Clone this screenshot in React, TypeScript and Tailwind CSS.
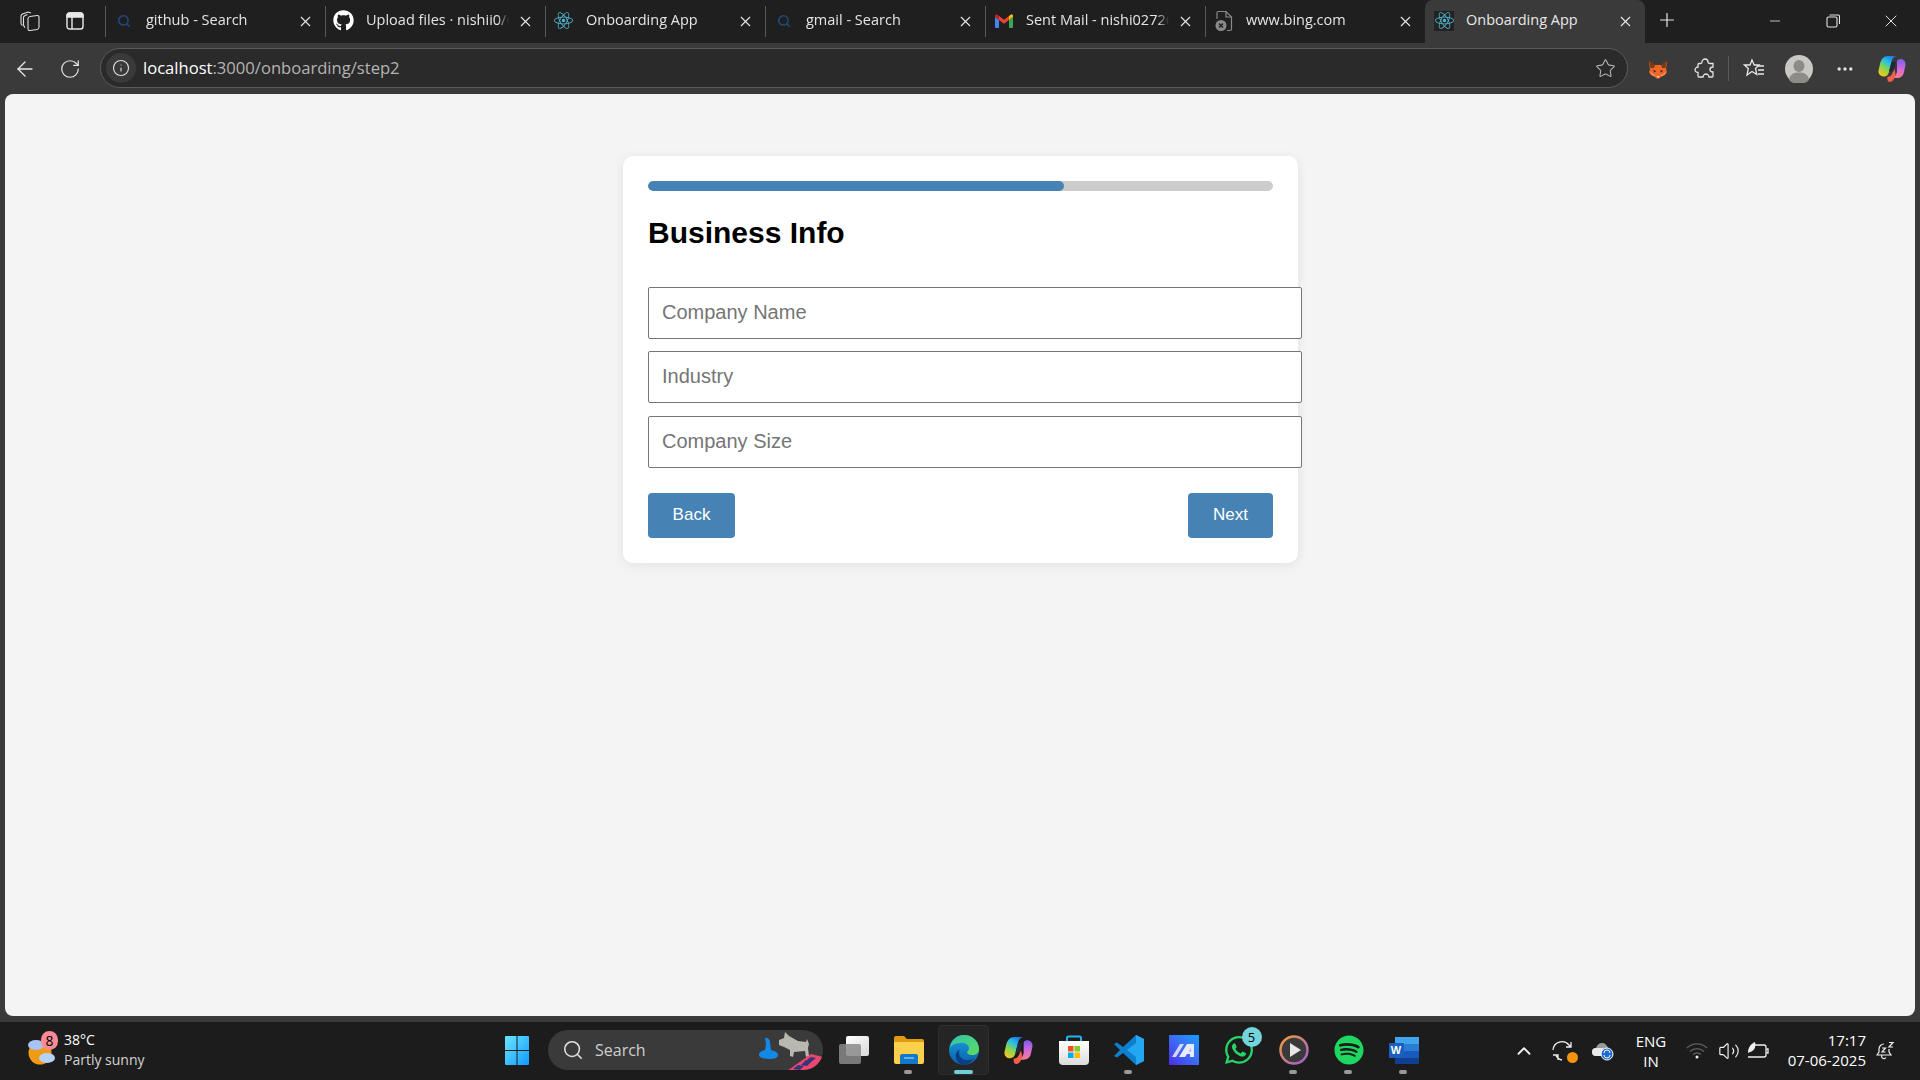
import React from 'react';
import { FaGithub, FaReact, FaSpotify, FaWhatsapp } from 'react-icons/fa';
import { ArrowLeft, ChevronUp, Info, Minus, MoreHorizontal, Plus, RotateCw, Search, Star, Volume2, X } from 'lucide-react';

const ui = "font-['Open_Sans',sans-serif]";

function GmailIcon() {
  return (
    <svg width="18" height="16" viewBox="0 0 18 14">
      <path d="M0 3v10a1 1 0 0 0 1 1h3V6z" fill="#4285f4" />
      <path d="M14 6v8h3a1 1 0 0 0 1-1V3z" fill="#34a853" />
      <path d="M0 3l4 3V2L2 .5C1 0 0 1 0 2z" fill="#c5221f" />
      <path d="M4 2v4l5 3.8L14 6V2L9 5.800z" fill="#ea4335" />
      <path d="M14 2v4l4-3V2c0-1-1-2-2-1.500z" fill="#fbbc04" />
    </svg>
  );
}

function BrokenPageIcon() {
  return (
    <svg width="18" height="22" viewBox="0 0 18 22" fill="none">
      <path d="M2 9V3a1.500 1.500 0 0 1 1.500-1.500H11L16.500 7v12a1.500 1.500 0 0 1-1.500 1.500h-3" stroke="#8a8a8a" strokeWidth="1.200" />
      <path d="M11 1.500V7h5.500" stroke="#8a8a8a" strokeWidth="1.200" />
      <circle cx="6" cy="15.500" r="5.500" fill="#8a8a8a" />
      <path d="M4 13.500l4 4M8 13.500l-4 4" stroke="#222" strokeWidth="1.500" />
    </svg>
  );
}

const tabs = [
  { title: 'github - Search', icon: <Search size={14} color="#1c4e80" strokeWidth={2.500} /> },
  { title: 'Upload files · nishii0/Onboarding', icon: <FaGithub size={21} color="#fff" /> },
  { title: 'Onboarding App', icon: <FaReact size={19} color="#4fb3cf" /> },
  { title: 'gmail - Search', icon: <Search size={14} color="#1c4e80" strokeWidth={2.500} /> },
  { title: 'Sent Mail - nishi02726@gmail.com', icon: <GmailIcon /> },
  { title: 'www.bing.com', icon: <BrokenPageIcon /> },
];

function Tab({ title, icon }: { title: string; icon: React.ReactNode }) {
  return (
    <div className="relative w-[220px] h-full flex items-center pl-[6px]">
      <div className="w-px h-[31px] bg-[#5a5a5a] shrink-0" />
      <div className="w-[33px] flex justify-center shrink-0 ml-[1px] -mt-[2px]">{icon}</div>
      <div className="ml-[6px] w-[143px] -mt-[3px] text-[14.500px] text-[#e4e4e4] whitespace-nowrap overflow-hidden [mask-image:linear-gradient(to_right,black_92%,transparent)]">{title}</div>
      <X size={17} color="#e8e8e8" strokeWidth={1.500} className="absolute left-[198px] -mt-[1px]" />
    </div>
  );
}

function FoxIcon() {
  return (
    <svg width="20" height="20" viewBox="0 0 20 20">
      <path d="M1 3l6 3h6l6-3-1 7 1 3-2 3-4 2-1.500 1.500h-3L7 18l-4-2-2-3 1-3z" fill="#f0672b" />
      <path d="M1 1l6 5-1 3H2.500zM19 1l-6 5 1 3h3.500z" fill="#7a3a14" />
      <path d="M8.500 17h3l-1.500 2z" fill="#e8e8e8" />
      <path d="M5 11l3 1-1.500 1.500zM15 11l-3 1 1.500 1.500z" fill="#2a2018" />
      <path d="M2 13l4 3 2 1H6l-3-2z" fill="#f6a26a" />
      <path d="M18 13l-4 3-2 1h2l3-2z" fill="#f6a26a" />
    </svg>
  );
}

function PuzzleIcon() {
  return (
    <svg width="22" height="24" viewBox="0 0 22 24" fill="none" stroke="#e4e4e4" strokeWidth="1.300">
      <path d="M8 5a3 3 0 0 1 3-3 3 3 0 0 1 3 3c0 1 1 1.500 2 1.500h3v3.500c-1.500 0-3 1-3 2.500s1.500 2.500 3 2.500v4a1 1 0 0 1-1 1h-3c0-1.500-1.500-3-3-3s-3 1.500-3 3H5a1 1 0 0 1-1-1v-3.500c-1.500 0-3-1-3-2.500s1.500-3 3-3V7.500a1 1 0 0 1 1-1h1.500C7 6.500 8 6 8 5z" />
    </svg>
  );
}

function FavoritesIcon() {
  return (
    <svg width="22" height="22" viewBox="0 0 22 22" fill="none" stroke="#e8e8e8" strokeWidth="1.300">
      <path d="M9 2l2.200 5H16l-3.500 3.500 1.300 6L9 13.500 4 17l1.300-6.500L1.500 7H7z" />
      <path d="M15 8h6M15 12h6M15 16h6" />
    </svg>
  );
}

function ProfileIcon() {
  return (
    <svg width="28" height="28" viewBox="0 0 28 28">
      <circle cx="14" cy="14" r="14" fill="#c9c8c3" />
      <ellipse cx="14" cy="11" rx="5.500" ry="6" fill="#8c8b87" />
      <path d="M4 25c1-6 5-7.500 10-7.500S23 19 24 25a14 14 0 0 1-20 0z" fill="#8c8b87" />
    </svg>
  );
}

function CopilotIcon({ size, id }: { size: number; id: string }) {
  return (
    <svg width={size} height={size} viewBox="0 0 28 28">
      <defs>
        <linearGradient id={`${id}a`} x1="0.800" y1="0" x2="0.200" y2="1">
          <stop offset="0" stopColor="#1f6fe8" />
          <stop offset="0.350" stopColor="#25c0e8" />
          <stop offset="0.650" stopColor="#8bd64a" />
          <stop offset="1" stopColor="#f8c420" />
        </linearGradient>
        <linearGradient id={`${id}b`} x1="0.500" y1="0" x2="0.500" y2="1">
          <stop offset="0" stopColor="#7a5cf0" />
          <stop offset="0.550" stopColor="#d66ad8" />
          <stop offset="1" stopColor="#f77c8c" />
        </linearGradient>
      </defs>
      <path d="M10 1h9c-3 .5-4.500 2-5.500 5.500L11 17c-.8 3-2.500 4.500-5 4.500-3.500 0-6-2.500-5.500-6L2 9C3 4 6 1 10 1z" fill={`url(#${id}a)`} />
      <path d="M19 6c1-1.500 2-2 3.500-2 3 0 5.500 2.500 5 6l-1.500 7c-.8 4-3.500 6-7 6h-5c3-.8 4-3 5-6.500z" fill={`url(#${id}b)`} />
      <path d="M9 22c3 0 5-2 6-5l1.500-3 1 5c-.5 4-2.500 8-5.500 8-2 0-3-2-2.500-4z" fill="#f4604a" />
      <path d="M13.500 7h4.500l-3 9.500h-4z" fill="#25283a" />
    </svg>
  );
}

function WeatherIcon() {
  return (
    <div className="relative w-[34px] h-[38px]">
      <svg width="34" height="38" viewBox="0 0 34 38">
        <circle cx="13" cy="21" r="11.500" fill="#f09a16" />
        <ellipse cx="9" cy="13" rx="8" ry="5" fill="#a6c4f2" />
        <ellipse cx="20" cy="26" rx="8" ry="5" fill="#b6d0f6" />
      </svg>
      <div className="absolute left-[14px] -top-[1px] w-[17px] h-[19px] rounded-full bg-[#fa8b96] flex items-center justify-center text-[14px] leading-none text-black">8</div>
    </div>
  );
}

function StartIcon() {
  return (
    <svg width="24" height="29" viewBox="0 0 24 29">
      <defs>
        <linearGradient id="st" x1="0" y1="0" x2="1" y2="1">
          <stop offset="0" stopColor="#6ce5ff" />
          <stop offset="1" stopColor="#0f9bff" />
        </linearGradient>
      </defs>
      <path d="M0 1a1 1 0 0 1 1-1h10.500v14H0zM12.500 0H23a1 1 0 0 1 1 1v13H12.500zM0 15h11.500v14H1a1 1 0 0 1-1-1zM12.500 15H24v13a1 1 0 0 1-1 1H12.500z" fill="url(#st)" />
    </svg>
  );
}

function SearchArt() {
  return (
    <svg width="66" height="40" viewBox="0 0 66 40">
      <path d="M8 7a4 4 0 0 1 5 4l1 8c5 1 7 3 7 5 0 3-4 4-9 4s-10-1-10-4c0-3 3-4 6-5l1-6z" fill="#1488e6" />
      <path d="M22 9l5-2 1-6 4 4 9 5 8 1 1-3 2 5-1 4 1 8-3 1-1-6-11 1-1 5-3-1v-6l-6-3-5-2z" fill="#b8b8b0" />
      <path d="M30 40l24-17 12 3-8 14z" fill="#e8486f" />
      <path d="M44 34l5-5 6 1-5 5zM54 26l5 1-4 3-5-1zM36 38l5-4 6 1-4 4z" fill="#34347a" />
    </svg>
  );
}

function TaskViewIcon() {
  return (
    <div className="relative w-[30px] h-[28px]">
      <div className="absolute left-[7px] top-0 w-[23px] h-[20px] rounded-[2px] bg-gradient-to-br from-white to-[#d8d8d8]" />
      <div className="absolute left-0 top-[8px] w-[22px] h-[20px] rounded-[2px] bg-[#8a8a8a]/85" />
    </div>
  );
}

function ExplorerIcon() {
  return (
    <svg width="30" height="28" viewBox="0 0 30 28">
      <path d="M0 2a2 2 0 0 1 2-2h8l3 3h15a2 2 0 0 1 2 2v4H0z" fill="#e09c0e" />
      <path d="M0 6h30v20a2 2 0 0 1-2 2H2a2 2 0 0 1-2-2z" fill="#fbd04c" />
      <path d="M6 20a2 2 0 0 1 2-2h14a2 2 0 0 1 2 2v8H6z" fill="#1478c8" />
      <path d="M10 22h10" stroke="#7fc4f5" strokeWidth="1.500" />
    </svg>
  );
}

function EdgeIcon() {
  return (
    <svg width="30" height="30" viewBox="0 0 30 30">
      <defs>
        <linearGradient id="eg" x1="0" y1="0" x2="1" y2="1">
          <stop offset="0" stopColor="#2fc4a8" />
          <stop offset="1" stopColor="#5fdc60" />
        </linearGradient>
        <linearGradient id="eb" x1="0" y1="0" x2="0" y2="1">
          <stop offset="0" stopColor="#1aa0e0" />
          <stop offset="1" stopColor="#0c5fa8" />
        </linearGradient>
      </defs>
      <circle cx="15" cy="15" r="15" fill="url(#eb)" />
      <path d="M1 13C2 5 8 0 15 0c8 0 15 6 15 14 0 4-3 6-7 6-3 0-5-1-5-3 1-1 2-2 2-4 0-3-4-6-9-5-5 .5-9 2-10 5z" fill="url(#eg)" />
      <path d="M10 17c0 6 5 9 10 8 2 0 4-1 5-2-2 4-6 7-11 7-5-1-8-6-7-11 .5-2 2-4 4-4-1 1-1 1-1 2z" fill="#0a3f86" />
    </svg>
  );
}

function StoreIcon() {
  return (
    <svg width="30" height="30" viewBox="0 0 30 30">
      <defs>
        <linearGradient id="sb" x1="0" y1="0" x2="0" y2="1">
          <stop offset="0" stopColor="#ffffff" />
          <stop offset="1" stopColor="#dcdcdc" />
        </linearGradient>
      </defs>
      <path d="M8 7V3a1.500 1.500 0 0 1 1.500-1.500h11A1.500 1.500 0 0 1 22 3v4" fill="none" stroke="#25b4ec" strokeWidth="2" />
      <path d="M0 6h30v20a4 4 0 0 1-4 4H4a4 4 0 0 1-4-4z" fill="url(#sb)" />
      <rect x="9" y="11" width="5.500" height="5.500" fill="#f1511b" />
      <rect x="15.500" y="11" width="5.500" height="5.500" fill="#80cc28" />
      <rect x="9" y="17.500" width="5.500" height="5.500" fill="#00adef" />
      <rect x="15.500" y="17.500" width="5.500" height="5.500" fill="#fbbc09" />
    </svg>
  );
}

function VsCodeIcon() {
  return (
    <svg width="30" height="30" viewBox="0 0 30 30">
      <path d="M22 0l8 4v22l-8 4L9 18l-6 4.500L0 21l6-6-6-6 3-1.500L9 12z" fill="#0e7fcf" />
      <path d="M22 0l8 4v22l-8 4z M22 8l-9 7 9 7z" fill="#23a7f2" fillRule="evenodd" />
    </svg>
  );
}

function MarkerAppIcon() {
  return (
    <div className="w-[30px] h-[30px] bg-gradient-to-tr from-[#4a25e8] to-[#0a9cff] overflow-hidden">
      <svg width="30" height="30" viewBox="0 0 30 30">
        <path d="M3 22L11 9h4L7 22z" fill="#d4d6ff" />
        <path d="M10 22L18 9h7v13h-4v-3h-3l-2 3z" fill="#e8ebff" />
        <path d="M20.500 16.500h1V13z" fill="#3c5cf0" />
      </svg>
    </div>
  );
}

function PlayerIcon() {
  return (
    <svg width="30" height="30" viewBox="0 0 30 30">
      <defs>
        <linearGradient id="pl" x1="0" y1="0" x2="1" y2="1">
          <stop offset="0" stopColor="#f59a3d" />
          <stop offset="1" stopColor="#9a5fd0" />
        </linearGradient>
      </defs>
      <circle cx="15" cy="15" r="13.500" fill="#3a3a3a" stroke="url(#pl)" strokeWidth="2.500" />
      <path d="M11 8l11 7-11 7z" fill="#e8e8e8" />
    </svg>
  );
}

function WordIcon() {
  return (
    <div className="relative w-[30px] h-[27px]">
      <svg width="30" height="27" viewBox="0 0 30 27" className="absolute left-0 top-0">
        <rect x="6" y="0" width="24" height="7" fill="#41a5ee" />
        <rect x="6" y="7" width="24" height="7" fill="#2b7cd3" />
        <rect x="6" y="14" width="24" height="7" fill="#185abd" />
        <rect x="6" y="21" width="24" height="6" fill="#103f91" />
      </svg>
      <div className="absolute left-0 top-[6px] w-[15px] h-[15px] rounded-[1px] bg-[#1a5fc0] flex items-center justify-center text-[11px] font-bold leading-none text-white font-['Liberation_Sans',sans-serif]">W</div>
    </div>
  );
}

function TaskIcon({ children, dot, active }: { children: React.ReactNode; dot?: boolean; active?: boolean }) {
  return (
    <div className="relative w-[55px] h-full flex items-center justify-center">
      {active && <div className="absolute left-[2px] right-[2px] top-[3px] bottom-[5px] rounded-[4px] bg-[#252525] border border-[#2e2e2e]" />}
      <div className="relative -mt-[2px]">{children}</div>
      {dot && <div className="absolute bottom-[6px] left-[23px] w-[8px] h-[4px] rounded-full bg-[#9a9a9a]" />}
      {active && <div className="absolute bottom-[6px] left-[18px] w-[19px] h-[4px] rounded-full bg-[#6fd0d8]" />}
    </div>
  );
}

function SyncIcon() {
  return (
    <div className="relative w-[22px] h-[22px]">
      <svg width="22" height="22" viewBox="0 0 22 22" fill="none" stroke="#f0f0f0" strokeWidth="1.300">
        <path d="M1 10a9 9 0 0 1 16-5l2 2M19 2v5h-5M4 16l2 2a8 8 0 0 0 4 2M1 15h5v5" />
      </svg>
      <div className="absolute right-[-4px] bottom-[-1px] w-[11px] h-[11px] rounded-full bg-[#f7940d]" />
    </div>
  );
}

function CloudIcon() {
  return (
    <svg width="22" height="20" viewBox="0 0 22 20">
      <path d="M4 15a4 4 0 0 1 0-8c1-3 3-5 6-5s5 2 6 5v8z" fill="#9a9a9a" />
      <path d="M0 11a4 4 0 0 1 4-4h7v8H4a4 4 0 0 1-4-4z" fill="#e8e8e8" />
      <circle cx="15" cy="13" r="6" fill="#1c6dd0" stroke="#fff" strokeWidth="1" />
      <path d="M12 12a3 3 0 0 1 6 0M18 14a3 3 0 0 1-6 0" stroke="#fff" strokeWidth="1" fill="none" />
    </svg>
  );
}

function WifiIcon() {
  return (
    <svg width="22" height="16" viewBox="0 0 22 16" fill="none" stroke="#5f5f5f" strokeWidth="1.300">
      <path d="M1 5a14 14 0 0 1 20 0M4 8.500a10 10 0 0 1 14 0M7 11.500a6 6 0 0 1 8 0" />
      <circle cx="11" cy="14" r="1.500" fill="#f0f0f0" stroke="none" />
    </svg>
  );
}

function BatteryIcon() {
  return (
    <svg width="22" height="20" viewBox="0 0 22 20" fill="none" stroke="#f0f0f0" strokeWidth="1.300">
      <path d="M8 4h9a2 2 0 0 1 2 2v8a2 2 0 0 1-2 2H1" />
      <path d="M19.500 8H21v4h-1.500" />
      <path d="M1 12C1 6 4 3 8 1c1 4 0 9-5 10z" fill="#f0f0f0" stroke="none" />
    </svg>
  );
}

function BellIcon() {
  return (
    <svg width="20" height="20" viewBox="0 0 20 20" fill="none" stroke="#f0f0f0" strokeWidth="1.200">
      <path d="M8 3a5 5 0 0 0-5 5v3l-2 3h14l-2-3V8" />
      <path d="M6 14a2 2 0 0 0 4 2.500" />
      <path d="M6 7h3.500L6 11h3.500M13 1.500h4l-4 4.500h4" />
    </svg>
  );
}

function Field({ placeholder }: { placeholder: string }) {
  return (
    <input
      placeholder={placeholder}
      className="box-content block w-full h-[24px] pt-[12px] pb-[14px] pl-[13px] pr-[14px] border border-[#767676] rounded-[2px] bg-white text-[20px] placeholder:text-[#757575] font-['Liberation_Sans',sans-serif]"
    />
  );
}

function App() {
  return (
    <div className={`w-screen h-screen flex flex-col overflow-hidden bg-[#3a3a3a] ${ui}`}>
      {/* tab strip */}
      <div className="h-[43px] shrink-0 flex items-center bg-[#1f1f1f]">
        <div className="w-[99px] h-full flex items-center shrink-0">
          <svg width="22" height="22" viewBox="0 0 22 22" fill="none" stroke="#e0e0e0" strokeWidth="1.100" className="ml-[19px] -mt-[2px]">
            <rect x="9" y="6" width="11" height="14" rx="2" transform="skewY(-8) translate(0 2)" />
            <path d="M8.500 4.500L6 5.500c-1 .5-1.500 1-1.500 2v7c0 1.500.5 2 1.500 3M12 3L9 2 3.500 4C2.500 4.500 2 5 2 6v7c0 1 .5 2 1.500 2.500" />
          </svg>
          <svg width="18" height="18" viewBox="0 0 18 18" fill="none" stroke="#e8e8e8" strokeWidth="1.400" className="ml-[25px] -mt-[2px]">
            <rect x="1" y="1" width="16" height="16" rx="2.500" />
            <path d="M6 5V17" />
            <path d="M1 3.500a2.500 2.500 0 0 1 2.500-2.500h11A2.500 2.500 0 0 1 17 3.500V5H1z" fill="#e8e8e8" />
          </svg>
        </div>
        {tabs.map((t, i) => <Tab key={i} title={t.title} icon={t.icon} />)}
        <div className="relative w-[220px] h-full flex items-center rounded-t-[8px] bg-[#3a3a3a] ml-[6px]">
          <div className="w-[29px] flex justify-end shrink-0 -mt-[2px]">
            <div className="w-[20px] h-[20px] flex items-center justify-center bg-[#222]">
              <FaReact size={19} color="#4fb3cf" />
            </div>
          </div>
          <div className="ml-[12px] -mt-[3px] text-[14.500px] text-[#e8e8e8] whitespace-nowrap">Onboarding App</div>
          <X size={17} color="#e8e8e8" strokeWidth={1.500} className="absolute left-[192px] -mt-[1px]" />
        </div>
        <Plus size={22} color="#e8e8e8" strokeWidth={1.300} className="ml-[11px] -mt-[3px]" />
        <div className="ml-auto flex items-center h-full -mt-[2px]">
          <div className="w-[58px] flex justify-center"><Minus size={16} color="#e4e4e4" strokeWidth={1.200} /></div>
          <div className="w-[58px] flex justify-center">
            <svg width="14" height="14" viewBox="0 0 14 14" fill="none" stroke="#e4e4e4" strokeWidth="1.100">
              <rect x="1" y="3" width="10" height="10" rx="1.500" />
              <path d="M3.500 1H12a1.500 1.500 0 0 1 1.500 1.500V10" />
            </svg>
          </div>
          <div className="w-[58px] flex justify-center"><X size={20} color="#e4e4e4" strokeWidth={1.200} /></div>
        </div>
      </div>

      {/* toolbar */}
      <div className="h-[51px] shrink-0 flex items-center bg-[#3a3a3a]">
        <div className="w-[49px] flex justify-center"><ArrowLeft size={24} color="#e8e8e8" strokeWidth={1.300} /></div>
        <div className="w-[41px] flex justify-center"><RotateCw size={22} color="#e8e8e8" strokeWidth={1.300} /></div>
        <div className="ml-[10px] w-[1528px] h-[40px] -mt-[1px] flex items-center rounded-full bg-[#2a2a2a] border border-[#5a5a5a]">
          <div className="w-[30px] h-[30px] ml-[5px] rounded-full bg-[#3a3a3a] flex items-center justify-center">
            <Info size={18} color="#e0e0e0" strokeWidth={1.500} />
          </div>
          <div className="ml-[7px] text-[16.600px] whitespace-nowrap">
            <span className="text-white">localhost</span><span className="text-[#b4b4b4]">:3000/onboarding/step2</span>
          </div>
          <Star size={21} color="#b5b5b5" strokeWidth={1.200} className="ml-auto mr-[11px]" />
        </div>
        <div className="ml-[20px]"><FoxIcon /></div>
        <div className="ml-[26px]"><PuzzleIcon /></div>
        <div className="w-px h-[25px] bg-[#5a5a5a] ml-[12px]" />
        <div className="ml-[14px]"><FavoritesIcon /></div>
        <div className="ml-[20px]"><ProfileIcon /></div>
        <MoreHorizontal size={20} color="#e4e4e4" className="ml-[22px]" />
        <div className="ml-[23px]"><CopilotIcon size={28} id="cpt" /></div>
      </div>

      {/* page */}
      <div className="flex-1 min-h-0 px-[5px]">
        <div className="h-full rounded-[8px] bg-[#f4f4f4] pt-[62px] font-['Liberation_Sans',sans-serif]">
          <div className="ml-[618px] w-[675px] h-[407px] rounded-[10px] bg-white p-[25px] shadow-[0_2px_12px_rgba(0,0,0,0.08)]">
            <div className="h-[10px] rounded-[5px] bg-[#cccccc] overflow-hidden">
              <div className="h-full w-[66.500%] rounded-[5px] bg-[#4682b4]" />
            </div>
            <h2 className="mt-[25px] text-[30px] leading-[34px] font-bold text-black">Business Info</h2>
            <div className="mt-[37px] flex flex-col gap-[12px]">
              <Field placeholder="Company Name" />
              <Field placeholder="Industry" />
              <div className="mt-[1px]"><Field placeholder="Company Size" /></div>
            </div>
            <div className="mt-[25px] flex justify-between">
              <button className="w-[87px] h-[45px] pb-[2px] rounded-[4px] bg-[#4682b4] text-white text-[17px]">Back</button>
              <button className="w-[85px] h-[45px] pb-[2px] rounded-[4px] bg-[#4682b4] text-white text-[17px]">Next</button>
            </div>
          </div>
        </div>
      </div>

      <div className="h-[6px] shrink-0" />

      {/* taskbar */}
      <div className="h-[58px] shrink-0 flex bg-[#1c1c1c] text-white">
        <div className="w-[489px] shrink-0 flex items-center pl-[27px]">
          <WeatherIcon />
          <div className="ml-[3px] leading-[20px] -mt-[2px]">
            <div className="text-[14px]">38°C</div>
            <div className="text-[14px] text-[#d4d4d4]">Partly sunny</div>
          </div>
        </div>
        <TaskIcon><StartIcon /></TaskIcon>
        <div className="ml-[4px] mt-[8px] w-[275px] h-[40px] relative flex items-center rounded-full bg-[#3a3a3a]">
          <Search size={22} color="#e0e0e0" strokeWidth={1.700} className="ml-[14px]" />
          <span className="ml-[11px] text-[16px] text-[#cfcfcf]">Search</span>
          <div className="absolute right-[0px] top-[1px] h-[39px] overflow-hidden rounded-r-full"><SearchArt /></div>
        </div>
        <div className="ml-[3px] flex h-full">
          <TaskIcon><TaskViewIcon /></TaskIcon>
          <TaskIcon dot><ExplorerIcon /></TaskIcon>
          <TaskIcon active><EdgeIcon /></TaskIcon>
          <TaskIcon><CopilotIcon size={29} id="cpb" /></TaskIcon>
          <TaskIcon><StoreIcon /></TaskIcon>
          <TaskIcon dot><VsCodeIcon /></TaskIcon>
          <TaskIcon><MarkerAppIcon /></TaskIcon>
          <TaskIcon>
            <FaWhatsapp size={32} color="#25d366" />
            <div className="absolute -right-[7px] -top-[7px] w-[20px] h-[20px] rounded-full bg-[#74d4dc] flex items-center justify-center text-[13px] leading-none text-black">5</div>
          </TaskIcon>
          <TaskIcon dot><PlayerIcon /></TaskIcon>
          <TaskIcon dot><FaSpotify size={30} color="#1ed760" /></TaskIcon>
          <TaskIcon dot><WordIcon /></TaskIcon>
        </div>
        <div className="ml-auto flex items-center h-full pr-[14px]">
          <div className="w-[39px] flex justify-center"><ChevronUp size={22} color="#f0f0f0" strokeWidth={2} /></div>
          <div className="w-[39px] flex justify-center"><SyncIcon /></div>
          <div className="w-[42px] flex justify-center"><CloudIcon /></div>
          <div className="w-[54px] text-center text-[15px] leading-[20px]">ENG<br />IN</div>
          <div className="w-[37px] flex justify-center"><WifiIcon /></div>
          <div className="w-[28px] flex justify-center"><Volume2 size={22} color="#f0f0f0" strokeWidth={1.300} /></div>
          <div className="w-[29px] flex justify-center"><BatteryIcon /></div>
          <div className="w-[94px] -mt-[2px] text-right text-[15px] leading-[20px]">17:17<br />07-06-2025</div>
          <div className="w-[40px] flex justify-center"><BellIcon /></div>
        </div>
      </div>
    </div>
  );
}

export default App;
